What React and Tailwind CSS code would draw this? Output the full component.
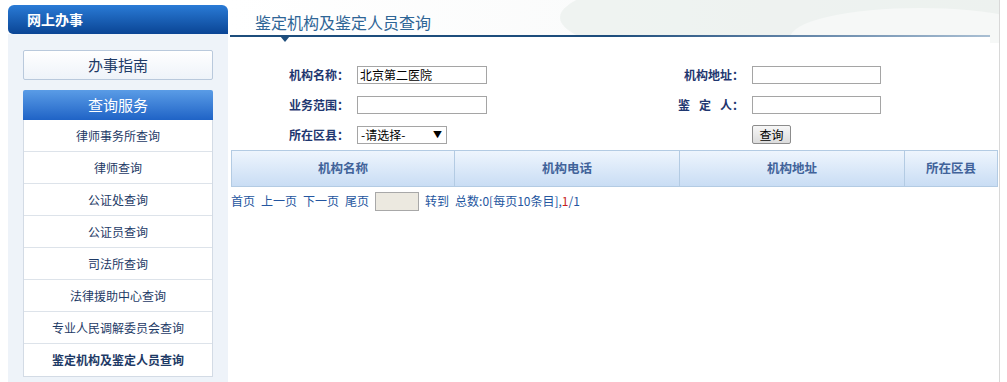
import React from "react";

const font = { fontFamily: '"Noto Sans CJK SC", "Noto Sans", sans-serif' };

const menu = [
  "律师事务所查询",
  "律师查询",
  "公证处查询",
  "公证员查询",
  "司法所查询",
  "法律援助中心查询",
  "专业人民调解委员会查询",
  "鉴定机构及鉴定人员查询",
];

function Sidebar() {
  return (
    <div className="w-[220px] ml-2 shrink-0">
      <div className="h-[29px] mt-[5px] rounded-t-[6px] rounded-bl-[5px] bg-gradient-to-b from-[#2a7bd6] to-[#0a4595] flex items-center pl-[19px] text-white text-[14px] font-bold">
        网上办事
      </div>
      <div className="bg-[#eef3f9] h-[348px] pt-4 px-[15px]">
        <div className="h-[30px] bg-gradient-to-b from-white to-[#eef3f9] border border-[#b9c9dc] rounded-[2px] flex items-center justify-center text-[15px] text-[#1d3a66]">
          办事指南
        </div>
        <div className="mt-[10px] h-[30px] bg-gradient-to-b from-[#5a9ce6] to-[#1f63c6] rounded-t-[2px] flex items-center justify-center text-[15px] text-white">
          查询服务
        </div>
        <div className="bg-white border-x border-b border-[#d3dbe5]">
          {menu.map((m, i) => (
            <div
              key={m}
              className={
                "h-[32px] flex items-center justify-center text-[12px] text-[#1d3a66] " +
                (i < menu.length - 1 ? "border-b border-[#dde3ea] " : "") +
                (i === menu.length - 1 ? "font-bold" : "")
              }
            >
              {m}
            </div>
          ))}
        </div>
      </div>
    </div>
  );
}

function Label({ children, w }) {
  return (
    <div className={"text-right text-[12px] font-bold text-[#1f3770] pr-[8px] " + w}>{children}</div>
  );
}

function Input({ value = "", w = "w-[130px]" }) {
  return (
    <div className={"h-[18px] border border-[#a5a5a5] bg-white text-[12px] text-black px-[2px] leading-[16px] " + w}>
      {value}
    </div>
  );
}

export default function App() {
  return (
    <div className="w-[1007px] h-[382px] bg-white flex overflow-hidden" style={font}>
      <Sidebar />
      <div className="ml-[2px] w-[770px] h-full border-r border-[#d8d8d8] flex flex-col">
        <div className="relative h-[43px] overflow-hidden bg-gradient-to-r from-white via-[#fafbfb] to-[#f4f6f5]">
          <div className="absolute left-[330px] -top-[30px] w-[460px] h-[95px] rounded-[50%] bg-[#e9f0ec] opacity-70" />
          <div className="absolute left-[560px] top-[8px] w-[260px] h-[60px] rounded-[50%] bg-[#f6f8f7]" />
          <div className="relative pl-[25px] pt-[11px] text-[16px] text-[#2e6596] leading-[22px]">
            鉴定机构及鉴定人员查询
          </div>
          <div className="absolute left-0 top-[35px] w-[760px] h-[2px] bg-gradient-to-r from-[#1d4d7c] via-[#1d4d7c] to-[#a9bfd3]" />
          <div className="absolute left-0 top-[37px] w-[760px] h-[6px] bg-white" />
          <div className="absolute left-[50px] top-[36px] w-0 h-0 border-l-[5px] border-r-[5px] border-t-[6px] border-l-transparent border-r-transparent border-t-[#1d4d7c]" />
        </div>
        <div className="pt-[23px]">
          <div className="flex items-center h-[18px]">
            <Label w="w-[127px]">机构名称：</Label>
            <Input value="北京第二医院" />
            <Label w="w-[265px]">机构地址：</Label>
            <Input w="w-[129px]" />
          </div>
          <div className="flex items-center h-[18px] mt-[12px]">
            <Label w="w-[127px]">业务范围：</Label>
            <Input />
            <Label w="w-[265px]">
              <span className="tracking-[9px]">鉴定</span>人：
            </Label>
            <Input w="w-[129px]" />
          </div>
          <div className="flex items-center h-[19px] mt-[11px]">
            <Label w="w-[127px]">所在区县：</Label>
            <div className="w-[90px] h-[18px] border border-[#a5a5a5] bg-white text-[12px] text-black flex items-center justify-between pl-[3px] pr-[4px]">
              <span>-请选择-</span>
              <span className="text-[9px]">▼</span>
            </div>
            <div className="w-[305px]" />
            <div className="w-[39px] h-[19px] border border-[#8c8c8c] rounded-[2px] bg-gradient-to-b from-[#f7f7f7] to-[#dcdcdc] text-[12px] text-black flex items-center justify-center">
              查询
            </div>
          </div>
        </div>
        <div className="mt-[6px] ml-[1px] w-[767px] h-[37px] flex border border-[#b3cbe3] bg-gradient-to-b from-[#eef5fd] to-[#c9ddf4] text-[12.5px] font-bold text-[#41639a]">
          <div className="w-[223px] border-r border-[#b3cbe3] flex items-center justify-center">机构名称</div>
          <div className="w-[225px] border-r border-[#b3cbe3] flex items-center justify-center">机构电话</div>
          <div className="w-[225px] border-r border-[#b3cbe3] flex items-center justify-center">机构地址</div>
          <div className="flex-1 flex items-center justify-center">所在区县</div>
        </div>
        <div className="mt-[4px] ml-[1px] flex items-center h-[20px] text-[12px] text-[#2456a0]">
          <span>首页</span>
          <span className="ml-[6px]">上一页</span>
          <span className="ml-[6px]">下一页</span>
          <span className="ml-[6px]">尾页</span>
          <div className="ml-[6px] w-[44px] h-[19px] border border-[#a8a8a8] bg-[#ece9e0]" />
          <span className="ml-[6px]">转到</span>
          <span className="ml-[6px]">
            总数:0[每页10条目],<span className="text-[#c81e1e]">1</span>/1
          </span>
        </div>
      </div>
    </div>
  );
}
